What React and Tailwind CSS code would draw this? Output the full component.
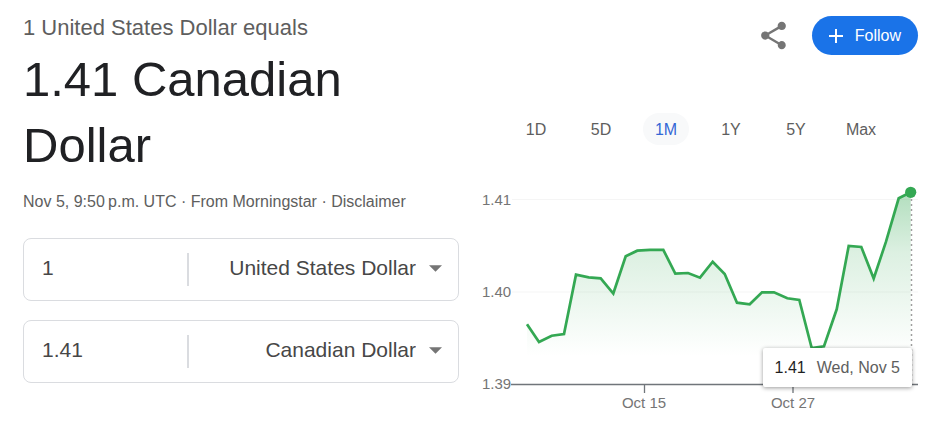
import { useState } from "react";
import { MdShare } from "react-icons/md";

const RANGES = ["1D", "5D", "1M", "1Y", "5Y", "Max"];
const CURRENCIES = ["United States Dollar", "Canadian Dollar"];

const POINTS = [
  [45, 144.3], [57, 162], [69.7, 155.7], [82, 154], [94, 94.7], [106.7, 97.3],
  [118.7, 98.3], [131.3, 113.5], [143.7, 76.3], [155.3, 70.7], [168, 69.8],
  [181.3, 69.8], [193.3, 93.7], [206, 93], [218, 97.7], [230.7, 81.7],
  [242.7, 94], [255, 122.7], [267.7, 124.3], [280, 112.3], [292, 112.3],
  [305.3, 118.3], [317.3, 120], [329.7, 168], [342, 166.3], [354.7, 129.3],
  [366.7, 66], [379.3, 67], [391.7, 98.5], [404, 61.7], [416.7, 18.3],
  [428.7, 12.3],
];
const LINE = POINTS.map((p) => p.join(",")).join(" ");

function CurrencyRow({ amount, currency }) {
  return (
    <div className="flex h-[63px] items-center rounded-lg border border-[#dadce0]">
      <input
        type="text"
        inputMode="decimal"
        aria-label={`Amount in ${currency}`}
        defaultValue={amount}
        className="h-full w-3/8 min-w-0 bg-transparent pb-1 pl-[18px] text-[21px] text-[#474747] outline-none"
      />
      <div className="h-[33px] w-0.5 bg-[#dadce0]" />
      <div className="relative h-full min-w-0 flex-1">
        <select
          aria-label="Currency"
          defaultValue={currency}
          className="h-full w-full appearance-none bg-transparent pr-[42px] pb-1 text-[21px] text-[#474747] outline-none [text-align-last:right]"
        >
          {CURRENCIES.map((c) => (
            <option key={c}>{c}</option>
          ))}
        </select>
        <svg viewBox="0 0 14 7" className="pointer-events-none absolute top-[26px] right-4 h-[7px] w-[13px]" aria-hidden="true">
          <path d="M0 0h14L7 7z" fill="#757575" />
        </svg>
      </div>
    </div>
  );
}

function Chart() {
  return (
    <div className="relative">
      <svg viewBox="0 0 436 240" className="block w-full" role="img" aria-label="Exchange rate over one month">
        <defs>
          <linearGradient id="area" gradientUnits="userSpaceOnUse" x1="0" y1="12" x2="0" y2="176">
            <stop offset="0" stopColor="#34a853" stopOpacity="0.38" />
            <stop offset="0.37" stopColor="#34a853" stopOpacity="0.17" />
            <stop offset="1" stopColor="#34a853" stopOpacity="0" />
          </linearGradient>
        </defs>
        <path d="M30 19.5H436M30 112H436" stroke="#f5f5f5" strokeWidth="1" />
        <polygon points={`${LINE} 428.7,176 45,176`} fill="url(#area)" />
        <path d="M29 204.5H436M162.5 205V213M311 205V213" stroke="#70757a" strokeWidth="1.3" fill="none" />
        <path d="M429.5 14V204" stroke="#9e9e9e" strokeWidth="1.5" strokeDasharray="2 3" />
        <polyline points={LINE} fill="none" stroke="#34a853" strokeWidth="2.7" />
        <circle cx="428.7" cy="12.3" r="5.6" fill="#34a853" />
        <g className="text-[15px]" fill="#757575">
          <text x="0" y="25">1.41</text>
          <text x="0" y="117">1.40</text>
          <text x="0" y="209">1.39</text>
          <text x="162" y="228" textAnchor="middle">Oct 15</text>
          <text x="311" y="228" textAnchor="middle">Oct 27</text>
        </g>
      </svg>
      <div className="absolute top-[70%] right-1.5 flex h-[39px] items-center gap-[11px] rounded-xs bg-white px-3 text-base whitespace-nowrap shadow-[0_1px_4px_rgba(0,0,0,0.4)]">
        <span className="text-[#1f1f1f]">1.41</span>
        <span className="text-[#5e5e5e]">Wed, Nov 5</span>
      </div>
    </div>
  );
}

export default function App() {
  const [range, setRange] = useState("1M");
  return (
    <main className="grid grid-cols-2 gap-[23px] bg-white pr-[29px] pl-[23px] font-['Liberation_Sans',Arial,sans-serif]">
      <section className="pt-3.5">
        <h1>
          <span className="block text-[22px] leading-7 text-[#5e5e5e]">1 United States Dollar equals</span>
          <span className="mt-1 block max-w-[400px] text-[49px] leading-[66px] text-[#202124]">1.41 Canadian Dollar</span>
        </h1>
        <p className="mt-3 text-base leading-6 whitespace-nowrap text-[#5e5e5e]">
          Nov 5, 9:50{"\u202f"}p.m. UTC · From Morningstar · <a href="#disclaimer">Disclaimer</a>
        </p>
        <div className="mt-6 flex flex-col gap-[19px]">
          <CurrencyRow amount="1" currency="United States Dollar" />
          <CurrencyRow amount="1.41" currency="Canadian Dollar" />
        </div>
      </section>
      <section className="pt-4">
        <div className="flex items-center justify-end gap-[22px]">
          <button type="button" aria-label="Share" className="text-[#757575]">
            <MdShare size={33} />
          </button>
          <button type="button" className="flex h-[39px] items-center gap-3 rounded-full bg-[#1a73e8] px-[17px] text-base text-white">
            <svg viewBox="0 0 14 14" className="size-3.5" aria-hidden="true">
              <path d="M7 0V14M0 7H14" stroke="currentColor" strokeWidth="2" />
            </svg>
            Follow
          </button>
        </div>
        <div className="mt-[58px] flex gap-[19px] pl-[31px]">
          {RANGES.map((r) => (
            <button
              key={r}
              type="button"
              aria-pressed={r === range}
              onClick={() => setRange(r)}
              className={`h-8 w-[46px] rounded-full pt-0.5 text-base ${r === range ? "bg-[#f8f9fa] text-[#3367d6]" : "text-[#5e5e5e]"}`}
            >
              {r}
            </button>
          ))}
        </div>
        <div className="mt-[35px]">
          <Chart />
        </div>
      </section>
    </main>
  );
}
